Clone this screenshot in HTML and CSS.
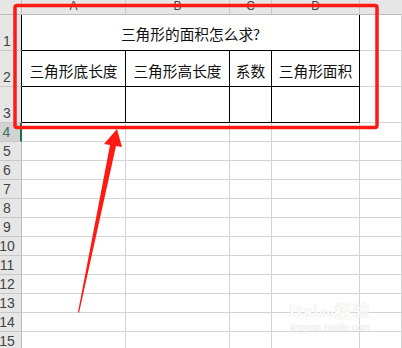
FILE: index.html
```html
<!DOCTYPE html>
<html>
<head>
<meta charset="utf-8">
<link rel="stylesheet" href="styles.css">
</head>
<body>
<div class="sheet">
  <div class="corner"></div>
  <div class="colh">A</div><div class="colh">B</div><div class="colh">C</div><div class="colh">D</div><div class="colh colh-e"></div>

  <div class="rowh rowh-t">1</div>
  <div class="cell title">三角形的面积怎么求?</div>
  <div class="cell"></div>

  <div class="rowh rowh-t">2</div>
  <div class="cell tb head">三角形底长度</div>
  <div class="cell tb head">三角形高长度</div>
  <div class="cell tb head">系数</div>
  <div class="cell tb tb-r head">三角形面积</div>
  <div class="cell"></div>

  <div class="rowh rowh-t">3</div>
  <div class="cell tb tb-b"></div>
  <div class="cell tb tb-b"></div>
  <div class="cell tb tb-b"></div>
  <div class="cell tb tb-b tb-r"></div>
  <div class="cell"></div>

  <div class="rowh sel">4</div><div class="cell"></div><div class="cell"></div><div class="cell"></div><div class="cell"></div><div class="cell"></div>
  <div class="rowh">5</div><div class="cell"></div><div class="cell"></div><div class="cell"></div><div class="cell"></div><div class="cell"></div>
  <div class="rowh">6</div><div class="cell"></div><div class="cell"></div><div class="cell"></div><div class="cell"></div><div class="cell"></div>
  <div class="rowh">7</div><div class="cell"></div><div class="cell"></div><div class="cell"></div><div class="cell"></div><div class="cell"></div>
  <div class="rowh">8</div><div class="cell"></div><div class="cell"></div><div class="cell"></div><div class="cell"></div><div class="cell"></div>
  <div class="rowh">9</div><div class="cell"></div><div class="cell"></div><div class="cell"></div><div class="cell"></div><div class="cell"></div>
  <div class="rowh">10</div><div class="cell"></div><div class="cell"></div><div class="cell"></div><div class="cell"></div><div class="cell"></div>
  <div class="rowh">11</div><div class="cell"></div><div class="cell"></div><div class="cell"></div><div class="cell"></div><div class="cell"></div>
  <div class="rowh">12</div><div class="cell"></div><div class="cell"></div><div class="cell"></div><div class="cell"></div><div class="cell"></div>
  <div class="rowh">13</div><div class="cell"></div><div class="cell"></div><div class="cell"></div><div class="cell"></div><div class="cell"></div>
  <div class="rowh">14</div><div class="cell"></div><div class="cell"></div><div class="cell"></div><div class="cell"></div><div class="cell"></div>
  <div class="rowh">15</div><div class="cell"></div><div class="cell"></div><div class="cell"></div><div class="cell"></div><div class="cell"></div>

  <svg class="annot" width="402" height="348" viewBox="0 0 402 348">
    <rect x="15" y="5.5" width="362" height="122" rx="2" fill="none" stroke="#ff1a14" stroke-width="3.5"/>
    <polygon points="117,129 122,147 116,146 79,313 78,312 110,145 104,144" fill="#ff1a14"/>
  </svg>

  <div class="wm">
    <div class="wm-logo"><span>Bai</span><span class="paw">du</span><span>经验</span></div>
    <div class="wm-url">jingyan.baidu.com</div>
  </div>
</div>
</body>
</html>
```

FILE: styles.css
```css
html, body {
  margin: 0;
  padding: 0;
  background: #ffffff;
}
body {
  width: 402px;
  height: 348px;
  overflow: hidden;
  font-family: "Noto Sans CJK SC", "Liberation Sans", sans-serif;
}
.sheet {
  position: relative;
  display: grid;
  grid-template-columns: 22px 104px 104px 42px 88px 42px;
  grid-template-rows: 15px 36px 36px 36px repeat(12, 19px);
  width: 402px;
  height: 348px;
  overflow: hidden;
}
.sheet > div {
  box-sizing: border-box;
}
.corner {
  background: #e6e6e6;
  border-right: 1px solid #bcbcbc;
  border-bottom: 1px solid #bcbcbc;
}
.colh {
  background: #e6e6e6;
  border-right: 1px solid #c8c8c8;
  border-bottom: 1px solid #bcbcbc;
  color: #444444;
  font-family: "Liberation Sans", sans-serif;
  font-size: 12px;
  line-height: 13px;
  text-align: center;
}
.colh-e {
  border-right: none;
}
.rowh {
  background: #e6e6e6;
  border-right: 1px solid #bcbcbc;
  border-bottom: 1px solid #c8c8c8;
  color: #444444;
  font-family: "Liberation Sans", sans-serif;
  font-size: 14px;
  line-height: 17px;
  padding-right: 7px;
  text-align: center;
  display: flex;
  align-items: flex-end;
  justify-content: center;
}
.rowh-t {
  border-right: 1px solid #000000;
}
.rowh.sel {
  background: #d2d2d2;
  color: #3d6e5a;
  border-right: 2px solid #217346;
}
.cell {
  border-right: 1px solid #d4d4d4;
  border-bottom: 1px solid #d4d4d4;
}
.title {
  grid-column: 2 / 6;
  border-right: 1px solid #000000;
  border-bottom: 1px solid #000000;
  font-size: 14.7px;
  color: #111111;
  display: flex;
  align-items: center;
  justify-content: center;
  padding-top: 1px;
}
.tb {
  border-right: 1px solid #000000;
  border-bottom: 1px solid #000000;
}
.head {
  font-size: 14.7px;
  color: #111111;
  display: flex;
  align-items: center;
  justify-content: center;
  padding-top: 3px;
  white-space: nowrap;
}
.annot {
  position: absolute;
  left: 0;
  top: 0;
  pointer-events: none;
}
.wm {
  position: absolute;
  left: 284px;
  top: 303px;
  width: 92px;
  text-align: center;
}
.wm-logo {
  font-family: "Liberation Sans", "Noto Sans CJK SC", sans-serif;
  font-size: 17px;
  font-weight: bold;
  line-height: 18px;
  letter-spacing: 1px;
  color: #fcfcfc;
  text-shadow: 0 0 1px #d0d0d0;
}
.paw {
  font-size: 11px;
}
.wm-url {
  font-family: "Liberation Sans", sans-serif;
  font-size: 10px;
  line-height: 12px;
  color: #f8f8f8;
  text-shadow: 0 0 1px #d8d8d8;
}
```
